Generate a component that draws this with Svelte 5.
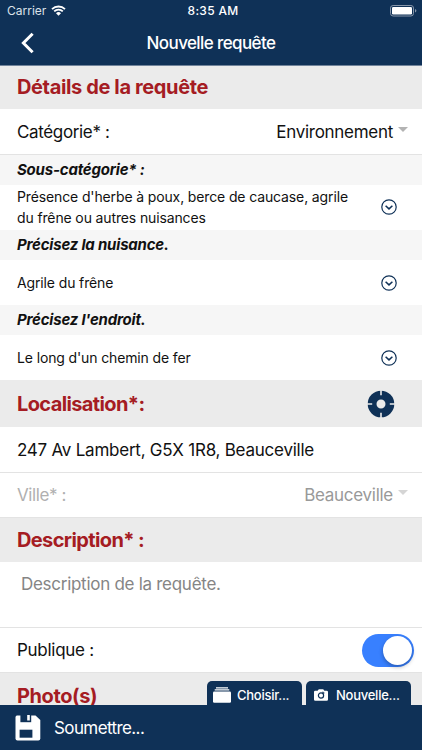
<script>
  let category = 'Environnement'
  let address = '247 Av Lambert, G5X 1R8, Beauceville'
  let city = 'Beauceville'
  let description = ''
  let isPublic = true

  const questions = [
    { label: 'Sous-catégorie* :', answer: "Présence d'herbe à poux, berce de caucase, agrile du frêne ou autres nuisances" },
    { label: 'Précisez la nuisance.', answer: 'Agrile du frêne' },
    { label: "Précisez l'endroit.", answer: "Le long d'un chemin de fer" }
  ]

  function togglePublic() {
    isPublic = !isPublic
  }
</script>

<div class="screen">
  <header>
    <div class="status">
      <span class="carrier">Carrier
        <svg width="15" height="11" viewBox="0 0 15 11">
          <path d="M1 4.2a9.2 9.2 0 0 1 13 0M3.2 6.4a6.1 6.1 0 0 1 8.6 0" fill="none" stroke="#fff" stroke-width="1.8" />
          <path d="M7.5 10.8 5 8.2a3.6 3.6 0 0 1 5 0z" fill="#fff" />
        </svg>
      </span>
      <span class="time">8:35 AM</span>
      <svg class="battery" width="27" height="12" viewBox="0 0 27 12">
        <rect x="0.5" y="0.5" width="23" height="10.5" rx="2.6" fill="none" stroke="#8796aa" />
        <rect x="2" y="2" width="20" height="7.5" rx="1.2" fill="#fff" />
        <path d="M25 4v3.6q1.4-.6 1.4-1.8T25 4z" fill="#8796aa" />
      </svg>
    </div>
    <div class="nav">
      <button class="back" aria-label="Retour">
        <svg width="14" height="22" viewBox="0 0 14 22">
          <path d="M11.6 1.8 2.4 11l9.2 9.2" fill="none" stroke="#fff" stroke-width="3" />
        </svg>
      </button>
      <span class="title">Nouvelle requête</span>
    </div>
  </header>

  <main>
    <div class="section first"><h2 class="details">Détails de la requête</h2></div>
    <div class="row category">
      <span class="label">Catégorie* :</span>
      <span class="select">{category}<i class="caret"></i></span>
    </div>

    {#each questions as question}
      <div class="question">{question.label}</div>
      <div class="answer">
        <p>{question.answer}</p>
        <svg width="16" height="16" viewBox="0 0 16 16" fill="none" stroke="#0f3157">
          <circle cx="8" cy="8" r="7.2" stroke-width="1.2" />
          <path d="M4.6 6.7 8 9.9l3.4-3.2" stroke-width="1.5" />
        </svg>
      </div>
    {/each}

    <div class="section location">
      <h2>Localisation*:</h2>
      <svg width="28" height="28" viewBox="0 0 28 28">
        <circle cx="14" cy="14" r="8.9" fill="none" stroke="#0f3157" stroke-width="8.8" />
        <path d="M14 0v5.2M14 22.8V28M0 14h5.2M22.8 14H28" stroke="#ebebeb" stroke-width="1.6" />
      </svg>
    </div>
    <div class="row address"><span>{address}</span></div>
    <div class="row disabled">
      <span class="ville">Ville* :</span>
      <span class="select">{city}<i class="caret"></i></span>
    </div>

    <div class="section description"><h2>Description* :</h2></div>
    <textarea placeholder="Description de la requête." bind:value={description}></textarea>
    <div class="row public">
      <span>Publique :</span>
      <button class="toggle" class:on={isPublic} on:click={togglePublic} aria-label="Publique"><i></i></button>
    </div>

    <div class="section photos">
      <h2>Photo(s)</h2>
      <div class="buttons">
        <button class="choose">
          <svg width="18" height="16" viewBox="0 0 18 16" fill="#fff">
            <path d="M3 .2h12v1.2H3zM1.7 2.3h14.6v1.3H1.7z" />
            <rect y="4.6" width="18" height="11.2" rx="1.2" />
          </svg>
          <span>Choisir...</span>
        </button>
        <button class="new">
          <svg width="14" height="12" viewBox="0 0 14 12">
            <path d="M1.3 1.8h2.3L4.8.2h4.4l1.2 1.6h2.3q1.3 0 1.3 1.3v7.3q0 1.3-1.3 1.3H1.3Q0 11.7 0 10.4V3.1q0-1.3 1.3-1.3z" fill="#fff" />
            <circle cx="7" cy="6.5" r="2.6" fill="none" stroke="#0f3157" stroke-width="1.2" />
            <path d="m8 3.2 2 .2-.4 1.8" fill="none" stroke="#0f3157" stroke-width=".8" />
          </svg>
          <span>Nouvelle...</span>
        </button>
      </div>
    </div>
  </main>

  <footer>
    <svg width="26" height="26" viewBox="0 0 26 26">
      <path d="M2 .5h18.5L25.3 5v18.5q0 2-2 2H2.5q-2 0-2-2v-21q0-2 1.5-2z" fill="#fff" />
      <path d="M5.4 0h10.8v7.2H5.4z" fill="#0f3157" />
      <path d="M12.2 0h2.6v5.6h-2.6z" fill="#fff" />
      <path d="M4.6 14.7h12.8v8H4.6z" fill="#0f3157" />
    </svg>
    <span>Soumettre...</span>
  </footer>
</div>

<style>
  :global(body) {
    background: #fff;
  }

  .screen {
    display: flex;
    flex-direction: column;
    width: 422px;
    height: 750px;
    overflow: hidden;
    font-family: Inter, "Liberation Sans", sans-serif;
    font-size: 17px;
    letter-spacing: -0.28px;
    color: #111;
  }

  .screen * {
    box-sizing: border-box;
  }

  button {
    padding: 0;
    border: 0;
    background: none;
    font-family: inherit;
    color: #fff;
  }

  svg {
    display: block;
    flex: none;
  }

  header {
    flex: none;
    height: 66px;
    background: #0f3157;
    border-bottom: 1px solid #71849b;
    color: #fff;
  }

  .status {
    display: grid;
    grid-template-columns: 1fr auto 1fr;
    align-items: center;
    height: 21px;
    padding: 0 5px 0 7px;
    font-size: 12px;
    letter-spacing: 0;
  }

  .carrier {
    display: flex;
    align-items: center;
    gap: 5px;
    color: #dce2e9;
  }

  .time {
    padding-left: 2px;
    font-weight: 500;
    letter-spacing: 0.3px;
  }

  .battery {
    justify-self: end;
  }

  .nav {
    display: grid;
    grid-template-columns: 60px 1fr 60px;
    align-items: center;
    height: 43px;
    text-align: center;
  }

  .back {
    padding-left: 21px;
  }

  .title {
    font-size: 17px;
    font-weight: 500;
    letter-spacing: -0.6px;
  }

  main {
    flex: 1;
    min-height: 0;
    overflow: hidden;
  }

  .section {
    display: flex;
    align-items: center;
    justify-content: space-between;
    height: 45px;
    padding: 0 17px;
    background: #ebebeb;
  }

  .first {
    height: 43px;
    padding-bottom: 2px;
  }

  h2 {
    margin: 0;
    font-size: 20px;
    font-weight: 700;
    line-height: 24px;
    letter-spacing: -0.62px;
    color: #a51c23;
  }

  .details {
    letter-spacing: -0.37px;
  }

  .row {
    display: flex;
    align-items: center;
    justify-content: space-between;
    height: 45.2px;
    padding: 0 14px 0 17px;
    border-bottom: 1px solid #e3e3e3;
  }

  .category {
    height: 45.5px;
    padding-top: 1px;
  }

  .label {
    letter-spacing: -0.35px;
  }

  .select {
    display: flex;
    align-items: center;
    gap: 5px;
  }

  .caret {
    border: 5px solid transparent;
    border-top-color: #b3b3b3;
    border-bottom: 0;
    margin-bottom: 5px;
  }

  .question {
    height: 30.2px;
    padding-left: 17px;
    background: #f6f6f6;
    font-size: 15px;
    font-weight: 700;
    font-style: italic;
    line-height: 30px;
    letter-spacing: -0.2px;
  }

  .answer {
    display: flex;
    align-items: center;
    justify-content: space-between;
    height: 45.1px;
    padding: 0 25px 0 17px;
    font-size: 14px;
    line-height: 21px;
    letter-spacing: -0.13px;
  }

  .answer p {
    width: 345px;
    margin: 0;
  }

  .location {
    height: 47px;
    padding-right: 27px;
  }

  .address {
    padding-top: 1px;
    letter-spacing: -0.24px;
  }

  .disabled {
    color: #999;
  }

  .ville {
    color: #b0b0b0;
    letter-spacing: -0.4px;
  }

  .disabled .caret {
    border-top-color: #d5d5d5;
  }

  .description {
    height: 44.6px;
  }

  textarea {
    display: block;
    width: 100%;
    height: 65.3px;
    padding: 11px 21px;
    border: 0;
    border-bottom: 1px solid #e3e3e3;
    outline: 0;
    resize: none;
    font: 17px/22px Inter, "Liberation Sans", sans-serif;
    letter-spacing: -0.28px;
  }

  textarea::placeholder {
    color: #858585;
  }

  .public {
    height: 45px;
    padding-top: 1px;
    padding-right: 8px;
  }

  .toggle {
    display: flex;
    width: 52px;
    height: 33px;
    padding: 2px;
    border-radius: 17px;
    background: #ddd;
  }

  .toggle i {
    width: 29px;
    height: 29px;
    border-radius: 50%;
    background: #fff;
    box-shadow: 0 2px 4px rgba(0, 0, 0, 0.3);
  }

  .on {
    justify-content: flex-end;
    background: #3880ff;
  }

  .photos {
    align-items: flex-start;
    padding: 8px 11px 0 17px;
  }

  .photos h2 {
    padding-top: 3px;
    letter-spacing: -0.4px;
  }

  .buttons {
    display: flex;
    gap: 4px;
  }

  .buttons button {
    display: flex;
    align-items: center;
    height: 29px;
    border-radius: 5px;
    background: #0f3157;
    font-size: 13px;
    font-weight: 500;
    letter-spacing: -0.25px;
  }

  .choose {
    width: 95px;
    padding-left: 6px;
    gap: 6px;
  }

  .new {
    width: 105px;
    padding-left: 8px;
    gap: 8px;
  }

  footer {
    display: flex;
    flex: none;
    align-items: center;
    gap: 13px;
    height: 45px;
    padding-left: 15px;
    background: #0f3157;
    color: #fff;
    letter-spacing: -0.6px;
  }
</style>
